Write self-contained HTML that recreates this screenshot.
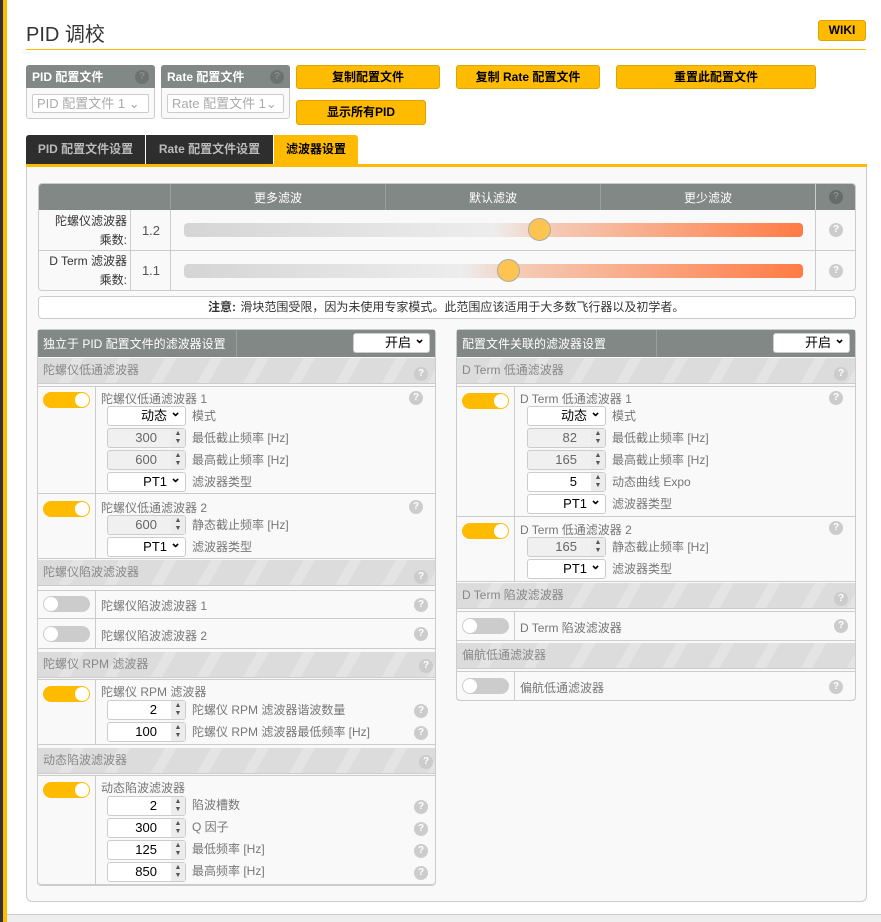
<!DOCTYPE html>
<html><head><meta charset="utf-8"><style>
*{box-sizing:border-box;margin:0;padding:0}
body{width:881px;height:922px;overflow:hidden;background:#fff;font-family:"Liberation Sans","Noto Sans CJK SC",sans-serif;font-size:12px;color:#555;position:relative}
.a{position:absolute}
.q{position:absolute;width:14px;height:14px;border-radius:50%;background:#ccc;color:#fff;font-size:10px;font-weight:bold;text-align:center;line-height:14px}
.qd{background:#6d716f;color:#8a8e8c}
.btn{position:absolute;background:#ffbb00;border:1px solid #e0a400;border-radius:3px;color:#000;font-weight:bold;text-align:center;font-size:12px;line-height:22px}
.sec{position:absolute;height:26px;background:repeating-linear-gradient(120deg,#dcdcdc 0 30px,#e4e4e4 30px 40px);color:#888;font-size:12px;line-height:24px;padding-left:5px;border-bottom:1px solid #ccc}
.row{position:absolute;border-top:1px solid #ccc;border-bottom:1px solid #ccc;background:#f9f9f9}
.row .div{position:absolute;left:57px;top:0;bottom:0;border-left:1px solid #ccc}
.tg{position:absolute;width:47px;height:16px;border-radius:8px;background:#ffbb00}
.tg::after{content:"";position:absolute;right:1px;top:1px;width:14px;height:14px;border-radius:50%;background:#fff}
.tgo{background:#ccc}
.tgo::after{left:1px;right:auto}
.in{position:absolute;width:79px;height:20px;border:1px solid #ccc;border-radius:3px;background:#fff;color:#000;text-align:right;padding-right:28px;line-height:18px;font-size:13px}
.in.dis{background:#f0f0f0;color:#666}
.in .sp{position:absolute;right:0;top:0;width:14px;height:18px;background:#ececec;font-size:7px;line-height:8px;text-align:center;color:#555;padding-top:1px}
.sl{position:absolute;width:79px;height:20px;border:1px solid #ccc;border-radius:3px;background:#fff;color:#000;text-align:right;padding-right:18px;line-height:18px;font-size:13px}
.sl::after{content:"⌄";position:absolute;right:4px;top:-4px;font-weight:bold;font-size:13px}
.lb{position:absolute;font-size:12px;color:#777;line-height:14px}
.tt{position:absolute;font-size:12px;color:#777}
</style></head><body>
<div class="a" style="left:0;top:0;width:3px;height:922px;background:#333"></div>
<div class="a" style="left:3px;top:0;width:4px;height:922px;background:#ffbb00"></div>
<div class="a" style="left:7px;top:165px;width:0;height:30px"></div>

<div class="a" style="left:26px;top:18px;font-size:20px;color:#333">PID 调校</div>
<div class="a" style="left:26px;top:49px;width:840px;height:1px;background:#ffbb00"></div>
<div class="btn" style="left:818px;top:20px;width:48px;height:21px;line-height:19px">WIKI</div>

<div class="a" style="left:26px;top:65px;width:129px;height:54px;border:1px solid #ccc;border-radius:3px;background:#f9f9f9"></div>
<div class="a" style="left:26px;top:65px;width:129px;height:23px;background:#828885;border-radius:3px 3px 0 0;color:#fff;font-weight:bold;padding:3px 6px">PID 配置文件</div>
<div class="q qd" style="left:135px;top:70px">?</div>
<div class="a" style="left:32px;top:94px;width:117px;height:19px;border:1px solid #ccc;border-radius:2px;background:#fff;color:#aaa;font-size:13px;padding-left:4px;line-height:17px">PID 配置文件 1 ⌄</div>
<div class="a" style="left:161px;top:65px;width:129px;height:54px;border:1px solid #ccc;border-radius:3px;background:#f9f9f9"></div>
<div class="a" style="left:161px;top:65px;width:129px;height:23px;background:#828885;border-radius:3px 3px 0 0;color:#fff;font-weight:bold;padding:3px 6px">Rate 配置文件</div>
<div class="q qd" style="left:270px;top:70px">?</div>
<div class="a" style="left:167px;top:94px;width:117px;height:19px;border:1px solid #ccc;border-radius:2px;background:#fff;color:#aaa;font-size:13px;padding-left:4px;line-height:17px">Rate 配置文件 1⌄</div>

<div class="btn" style="left:296px;top:65px;width:144px;height:24px">复制配置文件</div>
<div class="btn" style="left:456px;top:65px;width:144px;height:24px">复制 Rate 配置文件</div>
<div class="btn" style="left:616px;top:65px;width:200px;height:24px">重置此配置文件</div>
<div class="btn" style="left:296px;top:100px;width:130px;height:25px">显示所有PID</div>

<div class="a" style="left:26px;top:135px;width:119px;height:29px;background:#2e2e2e;color:#bbb;font-weight:bold;line-height:29px;text-align:center;border-radius:3px 0 0 0">PID 配置文件设置</div>
<div class="a" style="left:146px;top:135px;width:127px;height:29px;background:#2e2e2e;color:#bbb;font-weight:bold;line-height:29px;text-align:center">Rate 配置文件设置</div>
<div class="a" style="left:274px;top:135px;width:84px;height:30px;background:#ffbb00;color:#000;font-weight:bold;line-height:29px;text-align:center;border-radius:0 3px 0 0">滤波器设置</div>
<div class="a" style="left:26px;top:164px;width:841px;height:3px;background:#ffbb00"></div>
<div class="a" style="left:26px;top:167px;width:841px;height:735px;background:#f9f9f9;border:1px solid #ccc;border-top:none;border-radius:0 0 6px 6px"></div>

<!-- slider table -->
<div class="a" style="left:38px;top:183px;width:818px;height:108px;border:1px solid #ccc;border-radius:4px;background:#f9f9f9;overflow:hidden">
 <div class="a" style="left:0;top:0;width:818px;height:26px;background:#828885"></div>
 <div class="a" style="left:131px;top:0;width:1px;height:106px;background:#ccc"></div>
 <div class="a" style="left:131px;top:0;width:1px;height:26px;background:#9a9e9c"></div>
 <div class="a" style="left:346px;top:0;width:1px;height:26px;background:#9a9e9c"></div>
 <div class="a" style="left:561px;top:0;width:1px;height:26px;background:#9a9e9c"></div>
 <div class="a" style="left:776px;top:0;width:1px;height:106px;background:#ccc"></div>
 <div class="a" style="left:91px;top:26px;width:1px;height:80px;background:#ccc"></div>
 <div class="a" style="left:0;top:66px;width:818px;height:1px;background:#ccc"></div>
 <div class="a" style="left:132px;top:5px;width:214px;text-align:center;color:#fff">更多滤波</div>
 <div class="a" style="left:347px;top:5px;width:214px;text-align:center;color:#fff">默认滤波</div>
 <div class="a" style="left:562px;top:5px;width:214px;text-align:center;color:#fff">更少滤波</div>
 <div class="q qd" style="left:790px;top:6px;background:#676b69">?</div>
 <div class="a" style="left:4px;top:28px;width:84px;text-align:right;color:#333;line-height:19px">陀螺仪滤波器<br>乘数:</div>
 <div class="a" style="left:92px;top:39px;width:40px;text-align:center;color:#555;font-size:13px">1.2</div>
 <div class="a" style="left:4px;top:68px;width:84px;text-align:right;color:#333;line-height:19px">D Term 滤波器<br>乘数:</div>
 <div class="a" style="left:92px;top:79px;width:40px;text-align:center;color:#555;font-size:13px">1.1</div>
 <div class="a" style="left:145px;top:39px;width:619px;height:14px;border-radius:4px;background:linear-gradient(90deg,#d5d5d5,#ededed 50%,#f5c9b3 60%,#ff7b45)"></div>
 <div class="a" style="left:145px;top:80px;width:619px;height:14px;border-radius:4px;background:linear-gradient(90deg,#d5d5d5,#ededed 45%,#f5c9b3 55%,#ff7b45)"></div>
 <div class="a" style="left:489px;top:34px;width:23px;height:23px;border-radius:50%;background:#fec451;border:1px solid #aaa"></div>
 <div class="a" style="left:458px;top:75px;width:23px;height:23px;border-radius:50%;background:#fec451;border:1px solid #aaa"></div>
 <div class="q" style="left:790px;top:39px">?</div>
 <div class="q" style="left:790px;top:80px">?</div>
</div>
<div class="a" style="left:38px;top:296px;width:818px;height:23px;border:1px solid #ccc;border-radius:4px;background:#fff;text-align:center;line-height:21px;color:#333">注意: 滑块范围受限，因为未使用专家模式。此范围应该适用于大多数飞行器以及初学者。</div>
<div class="a" style="left:208px;top:298px;font-weight:bold;color:#333;line-height:19px;background:#fff">注意:</div>

<!-- left panel -->
<div class="a" style="left:37px;top:329px;width:399px;height:557px;border:1px solid #ccc;border-radius:4px;background:#f9f9f9"></div>
<div class="a" style="left:38px;top:330px;width:397px;height:27px;background:#828885;color:#fff;padding:5px 5px">独立于 PID 配置文件的滤波器设置</div>
<div class="a" style="left:236px;top:330px;width:1px;height:27px;background:#9a9e9c"></div>
<div class="sl" style="left:353px;top:333px;width:77px;font-size:13px">开启</div>

<div class="sec" style="left:38px;top:358px;width:397px;">陀螺仪低通滤波器</div><div class="q" style="left:414px;top:367px">?</div>
<div class="row" style="left:38px;top:386px;width:397px;height:108px"><div class="div"></div></div>
<div class="tg" style="left:43px;top:392px"></div>
<div class="tt" style="left:101px;top:390px">陀螺仪低通滤波器 1</div><div class="q" style="left:409px;top:391px">?</div>
<div class="sl" style="left:107px;top:406px">动态</div><div class="lb" style="left:192px;top:409px">模式</div>
<div class="in dis" style="left:107px;top:428px">300<div class="sp">▲<br>▼</div></div><div class="lb" style="left:192px;top:431px">最低截止频率 [Hz]</div>
<div class="in dis" style="left:107px;top:450px">600<div class="sp">▲<br>▼</div></div><div class="lb" style="left:192px;top:453px">最高截止频率 [Hz]</div>
<div class="sl" style="left:107px;top:472px">PT1</div><div class="lb" style="left:192px;top:475px">滤波器类型</div>
<div class="row" style="left:38px;top:494px;width:397px;height:65px;border-top:none"><div class="div"></div></div>
<div class="tg" style="left:43px;top:501px"></div>
<div class="tt" style="left:101px;top:499px">陀螺仪低通滤波器 2</div><div class="q" style="left:409px;top:500px">?</div>
<div class="in dis" style="left:107px;top:515px">600<div class="sp">▲<br>▼</div></div><div class="lb" style="left:192px;top:518px">静态截止频率 [Hz]</div>
<div class="sl" style="left:107px;top:537px">PT1</div><div class="lb" style="left:192px;top:540px">滤波器类型</div>

<div class="sec" style="left:38px;top:560px;width:397px;">陀螺仪陷波滤波器</div><div class="q" style="left:414px;top:570px">?</div>
<div class="row" style="left:38px;top:590px;width:397px;height:29px"><div class="div"></div></div>
<div class="tg tgo" style="left:43px;top:596px"></div><div class="tt" style="left:101px;top:597px">陀螺仪陷波滤波器 1</div><div class="q" style="left:414px;top:598px">?</div>
<div class="row" style="left:38px;top:619px;width:397px;height:30px;border-top:none"><div class="div"></div></div>
<div class="tg tgo" style="left:43px;top:626px"></div><div class="tt" style="left:101px;top:627px">陀螺仪陷波滤波器 2</div><div class="q" style="left:414px;top:627px">?</div>

<div class="sec" style="left:38px;top:652px;width:397px;">陀螺仪 RPM 滤波器</div><div class="q" style="left:419px;top:659px">?</div>
<div class="row" style="left:38px;top:679px;width:397px;height:66px"><div class="div"></div></div>
<div class="tg" style="left:43px;top:686px"></div>
<div class="tt" style="left:101px;top:683px">陀螺仪 RPM 滤波器</div>
<div class="in" style="left:107px;top:700px">2<div class="sp">▲<br>▼</div></div><div class="lb" style="left:192px;top:703px">陀螺仪 RPM 滤波器谐波数量</div><div class="q" style="left:414px;top:704px">?</div>
<div class="in" style="left:107px;top:722px">100<div class="sp">▲<br>▼</div></div><div class="lb" style="left:192px;top:725px">陀螺仪 RPM 滤波器最低频率 [Hz]</div><div class="q" style="left:414px;top:726px">?</div>

<div class="sec" style="left:38px;top:748px;width:397px;">动态陷波滤波器</div><div class="q" style="left:419px;top:755px">?</div>
<div class="row" style="left:38px;top:775px;width:397px;height:110px;border-radius:0 0 4px 4px"><div class="div"></div></div>
<div class="tg" style="left:43px;top:782px"></div>
<div class="tt" style="left:101px;top:779px">动态陷波滤波器</div>
<div class="in" style="left:107px;top:796px">2<div class="sp">▲<br>▼</div></div><div class="lb" style="left:192px;top:798px">陷波槽数</div><div class="q" style="left:414px;top:800px">?</div>
<div class="in" style="left:107px;top:818px">300<div class="sp">▲<br>▼</div></div><div class="lb" style="left:192px;top:820px">Q 因子</div><div class="q" style="left:414px;top:822px">?</div>
<div class="in" style="left:107px;top:840px">125<div class="sp">▲<br>▼</div></div><div class="lb" style="left:192px;top:842px">最低频率 [Hz]</div><div class="q" style="left:414px;top:844px">?</div>
<div class="in" style="left:107px;top:862px">850<div class="sp">▲<br>▼</div></div><div class="lb" style="left:192px;top:864px">最高频率 [Hz]</div><div class="q" style="left:414px;top:866px">?</div>

<!-- right panel -->
<div class="a" style="left:456px;top:329px;width:400px;height:372px;border:1px solid #ccc;border-radius:4px;background:#f9f9f9"></div>
<div class="a" style="left:457px;top:330px;width:398px;height:27px;background:#828885;color:#fff;padding:5px 5px">配置文件关联的滤波器设置</div>
<div class="a" style="left:656px;top:330px;width:1px;height:27px;background:#9a9e9c"></div>
<div class="sl" style="left:773px;top:333px;width:77px">开启</div>

<div class="sec" style="left:457px;top:358px;width:398px;">D Term 低通滤波器</div><div class="q" style="left:834px;top:367px">?</div>
<div class="row" style="left:457px;top:386px;width:398px;height:131px"><div class="div"></div></div>
<div class="tg" style="left:462px;top:393px"></div>
<div class="tt" style="left:520px;top:390px">D Term 低通滤波器 1</div><div class="q" style="left:829px;top:391px">?</div>
<div class="sl" style="left:527px;top:406px">动态</div><div class="lb" style="left:612px;top:409px">模式</div>
<div class="in dis" style="left:527px;top:428px">82<div class="sp">▲<br>▼</div></div><div class="lb" style="left:612px;top:431px">最低截止频率 [Hz]</div>
<div class="in dis" style="left:527px;top:450px">165<div class="sp">▲<br>▼</div></div><div class="lb" style="left:612px;top:453px">最高截止频率 [Hz]</div>
<div class="in" style="left:527px;top:472px">5<div class="sp">▲<br>▼</div></div><div class="lb" style="left:612px;top:475px">动态曲线 Expo</div>
<div class="sl" style="left:527px;top:494px">PT1</div><div class="lb" style="left:612px;top:497px">滤波器类型</div>
<div class="row" style="left:457px;top:517px;width:398px;height:65px;border-top:none"><div class="div"></div></div>
<div class="tg" style="left:462px;top:523px"></div>
<div class="tt" style="left:520px;top:521px">D Term 低通滤波器 2</div><div class="q" style="left:829px;top:521px">?</div>
<div class="in dis" style="left:527px;top:537px">165<div class="sp">▲<br>▼</div></div><div class="lb" style="left:612px;top:540px">静态截止频率 [Hz]</div>
<div class="sl" style="left:527px;top:559px">PT1</div><div class="lb" style="left:612px;top:562px">滤波器类型</div>

<div class="sec" style="left:457px;top:583px;width:398px;">D Term 陷波滤波器</div><div class="q" style="left:834px;top:592px">?</div>
<div class="row" style="left:457px;top:611px;width:398px;height:30px"><div class="div"></div></div>
<div class="tg tgo" style="left:462px;top:618px"></div><div class="tt" style="left:520px;top:619px">D Term 陷波滤波器</div><div class="q" style="left:834px;top:619px">?</div>
<div class="sec" style="left:457px;top:643px;width:398px;">偏航低通滤波器</div>
<div class="row" style="left:457px;top:671px;width:398px;height:30px;border-radius:0 0 4px 4px"><div class="div"></div></div>
<div class="tg tgo" style="left:462px;top:678px"></div><div class="tt" style="left:520px;top:679px">偏航低通滤波器</div><div class="q" style="left:829px;top:680px">?</div>

<div class="a" style="left:7px;top:914px;width:874px;height:8px;background:#eee;border-top:1px solid #ccc"></div>
</body></html>
